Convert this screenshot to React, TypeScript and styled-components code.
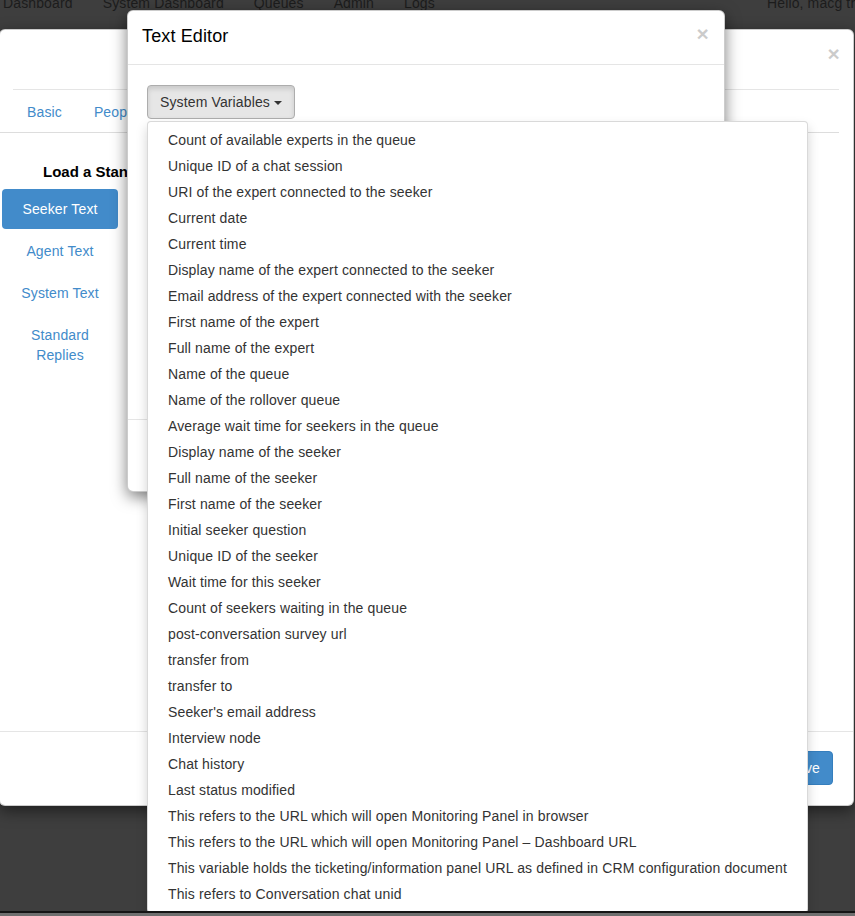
import styled, { createGlobalStyle } from 'styled-components';

const GlobalStyle = createGlobalStyle`
  html, body {
    margin: 0;
    padding: 0;
    background: #3e3e3e;
    overflow: hidden;
  }
  body {
    font-family: 'Liberation Sans', Arial, sans-serif;
    font-size: 14px;
    line-height: 20px;
    letter-spacing: 0.13px;
    color: #333;
  }
  * { box-sizing: border-box; }
`;

const Page = styled.div`
  position: relative;
  width: 855px;
  height: 916px;
  overflow: hidden;
`;

const Navbar = styled.div`
  display: flex;
  align-items: flex-end;
  height: 13px;
  padding-left: 3px;
  gap: 30px;
  color: #1c1c1c;
  white-space: nowrap;
`;

const Greeting = styled.span`
  margin-left: auto;
  width: 88px;
`;

const Modal = styled.div`
  position: absolute;
  display: flex;
  flex-direction: column;
  background: #fff;
  border: 1px solid rgba(0, 0, 0, 0.2);
  border-radius: 6px;
  box-shadow: 0 5px 15px rgba(0, 0, 0, 0.5);
`;

const OuterModal = styled(Modal)`
  left: -1px;
  top: 29px;
  width: 855px;
  height: 777px;
`;

const EditorModal = styled(Modal)`
  left: 127px;
  top: 10px;
  width: 598px;
  height: 482px;
  z-index: 2;
`;

const Close = styled.span`
  font-size: 21px;
  font-weight: bold;
  line-height: 1;
  color: #000;
  opacity: 0.2;
`;

const OuterHeader = styled.div`
  display: flex;
  justify-content: flex-end;
  height: 59px;
  padding: 13px 13px 0 0;
`;

const Divider = styled.div`
  height: 1px;
  margin: 0 14px 0 13px;
  background: #e5e5e5;
`;

const Tabs = styled.div`
  display: flex;
  margin: 2px 14px 0 0;
  padding-left: 12px;
  border-bottom: 1px solid #ddd;
`;

const Tab = styled.a`
  padding: 10px 15px;
  margin-right: 2px;
  color: #428bca;
`;

const OuterBody = styled.div`
  display: flex;
  flex-direction: column;
  padding: 29px 0 0 2px;
`;

const SideHeading = styled.div`
  padding-left: 41px;
  margin-bottom: 7px;
  font-size: 15px;
  font-weight: bold;
  letter-spacing: 0;
  color: #000;
  white-space: nowrap;
`;

const Pills = styled.div`
  display: flex;
  flex-direction: column;
  gap: 2px;
  width: 116px;
`;

const Pill = styled.a<{ $active?: boolean }>`
  padding: 10px 15px;
  border-radius: 4px;
  text-align: center;
  color: ${(p) => (p.$active ? '#fff' : '#428bca')};
  background: ${(p) => (p.$active ? '#428bca' : 'transparent')};
`;

const OuterFooter = styled.div`
  display: flex;
  justify-content: flex-end;
  margin-top: auto;
  padding: 19px 20px 20px;
  border-top: 1px solid #e5e5e5;
`;

const PrimaryButton = styled.button`
  height: 34px;
  padding: 6px 12px;
  border: 1px solid #357ebd;
  border-radius: 4px;
  background: #428bca;
  color: #fff;
  font: inherit;
  letter-spacing: inherit;
`;

const EditorHeader = styled.div`
  display: flex;
  justify-content: space-between;
  align-items: flex-start;
  height: 54px;
  padding: 12px 15px 0 14px;
  border-bottom: 1px solid #e5e5e5;
`;

const Title = styled.h4`
  margin: 0;
  font-size: 18px;
  font-weight: normal;
  line-height: 26px;
  color: #000;
`;

const EditorBody = styled.div`
  flex: 1;
  padding: 20px 20px 20px 19px;
`;

const EditorFooter = styled.div`
  height: 72px;
  border-top: 1px solid #e5e5e5;
`;

const Dropdown = styled.div`
  position: relative;
  display: inline-block;
`;

const DropButton = styled.button`
  display: flex;
  align-items: center;
  gap: 4px;
  height: 34px;
  padding: 6px 12px;
  border: 1px solid #adadad;
  border-radius: 4px;
  background: #e6e6e6;
  box-shadow: inset 0 3px 5px rgba(0, 0, 0, 0.125);
  color: #333;
  font: inherit;
  letter-spacing: inherit;
`;

const Caret = styled.span`
  width: 0;
  height: 0;
  border-top: 4px solid #333;
  border-left: 4px solid transparent;
  border-right: 4px solid transparent;
  margin-top: 1px;
`;

const Menu = styled.ul`
  position: absolute;
  top: 100%;
  left: 0;
  margin: 2px 0 0;
  padding: 5px 0;
  list-style: none;
  background: #fff;
  border: 1px solid rgba(0, 0, 0, 0.15);
  border-radius: 4px;
  box-shadow: 0 6px 12px rgba(0, 0, 0, 0.175);
  z-index: 5;
`;

const MenuItem = styled.li`
  padding: 3px 20px;
  white-space: nowrap;
  color: #333;
`;

const WindowEdge = styled.div`
  position: absolute;
  left: 0;
  right: 0;
  bottom: 0;
  height: 5px;
  border-top: 2px solid #151515;
  background: #6f6f6f;
  z-index: 10;
`;

const variables = [
  'Count of available experts in the queue',
  'Unique ID of a chat session',
  'URI of the expert connected to the seeker',
  'Current date',
  'Current time',
  'Display name of the expert connected to the seeker',
  'Email address of the expert connected with the seeker',
  'First name of the expert',
  'Full name of the expert',
  'Name of the queue',
  'Name of the rollover queue',
  'Average wait time for seekers in the queue',
  'Display name of the seeker',
  'Full name of the seeker',
  'First name of the seeker',
  'Initial seeker question',
  'Unique ID of the seeker',
  'Wait time for this seeker',
  'Count of seekers waiting in the queue',
  'post-conversation survey url',
  'transfer from',
  'transfer to',
  "Seeker's email address",
  'Interview node',
  'Chat history',
  'Last status modified',
  'This refers to the URL which will open Monitoring Panel in browser',
  'This refers to the URL which will open Monitoring Panel \u2013 Dashboard URL',
  'This variable holds the ticketing/information panel URL as defined in CRM configuration document',
  'This refers to Conversation chat unid',
];

function App() {
  return (
    <Page>
      <GlobalStyle />
      <Navbar>
        <span>Dashboard</span>
        <span>System Dashboard</span>
        <span>Queues</span>
        <span>Admin</span>
        <span>Logs</span>
        <Greeting>Hello, macg thomas</Greeting>
      </Navbar>

      <OuterModal>
        <OuterHeader>
          <Close>×</Close>
        </OuterHeader>
        <Divider />
        <Tabs>
          <Tab>Basic</Tab>
          <Tab>People</Tab>
        </Tabs>
        <OuterBody>
          <SideHeading>Load a Standard Text</SideHeading>
          <Pills>
            <Pill $active>Seeker Text</Pill>
            <Pill>Agent Text</Pill>
            <Pill>System Text</Pill>
            <Pill>Standard Replies</Pill>
          </Pills>
        </OuterBody>
        <OuterFooter>
          <PrimaryButton>Save</PrimaryButton>
        </OuterFooter>
      </OuterModal>

      <EditorModal>
        <EditorHeader>
          <Title>Text Editor</Title>
          <Close>×</Close>
        </EditorHeader>
        <EditorBody>
          <Dropdown>
            <DropButton>
              System Variables <Caret />
            </DropButton>
            <Menu>
              {variables.map((v) => (
                <MenuItem key={v}>{v}</MenuItem>
              ))}
            </Menu>
          </Dropdown>
        </EditorBody>
        <EditorFooter />
      </EditorModal>

      <WindowEdge />
    </Page>
  );
}

export default App;
